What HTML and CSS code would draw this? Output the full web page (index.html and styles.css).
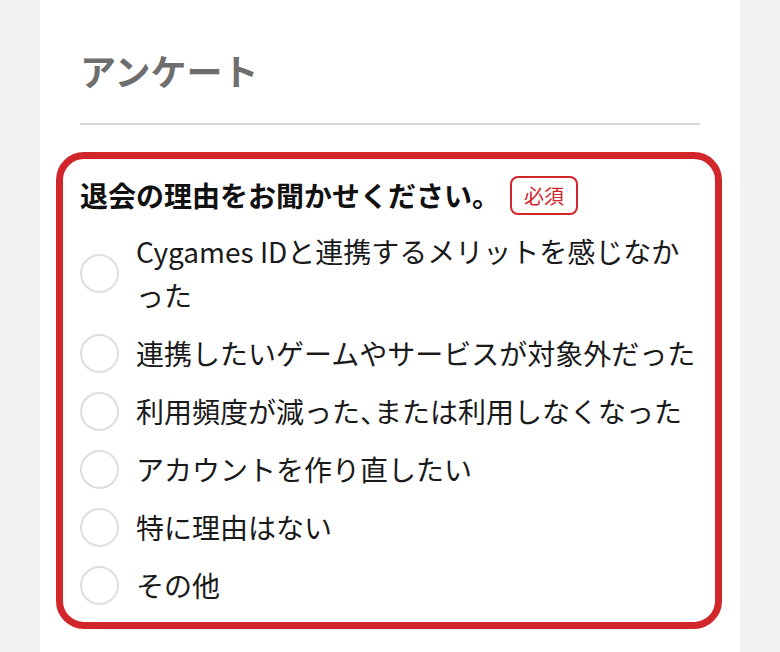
FILE: index.html
```html
<!DOCTYPE html>
<html lang="ja">
<head>
<meta charset="utf-8">
<title>アンケート</title>
<link rel="stylesheet" href="styles.css">
</head>
<body>
<main class="card">
  <h1 class="title">アンケート</h1>
  <hr class="divider">
  <section class="question">
    <div class="question-head">
      <span class="question-text">退会の理由をお聞かせください。</span>
      <span class="badge">必須</span>
    </div>
    <label class="option"><span class="radio"></span><span class="option-text">Cygames IDと連携するメリットを感じなかった</span></label>
    <label class="option"><span class="radio"></span><span class="option-text">連携したいゲームやサービスが対象外だった</span></label>
    <label class="option"><span class="radio"></span><span class="option-text">利用頻度が減った<span class="half">、</span>または利用しなくなった</span></label>
    <label class="option"><span class="radio"></span><span class="option-text">アカウントを作り直したい</span></label>
    <label class="option"><span class="radio"></span><span class="option-text">特に理由はない</span></label>
    <label class="option"><span class="radio"></span><span class="option-text">その他</span></label>
  </section>
</main>
</body>
</html>
```
FILE: styles.css
```css
html, body {
  margin: 0;
  padding: 0;
  background: #f2f2f2;
  height: 100%;
}
body {
  font-family: "Noto Sans CJK JP", "Noto Sans", sans-serif;
  color: #1a1a1a;
}
.card {
  box-sizing: border-box;
  width: 700px;
  min-height: 100%;
  margin: 0 40px;
  background: #ffffff;
  padding: 43px 40px 0;
}
.title {
  margin: 0;
  font-size: 36px;
  line-height: 54px;
  font-weight: 700;
  color: #6e6e6e;
}
.divider {
  margin: 26px 0 0;
  border: 0;
  height: 2px;
  background: #d8d8d8;
}
.question {
  margin: 27px -22px 0 -24px;
  border: 7px solid #d1272b;
  border-radius: 28px;
  padding: 16px 15px 15px 17px;
  display: flex;
  flex-direction: column;
  gap: 14px;
}
.question-head {
  display: flex;
  align-items: center;
  height: 40px;
}
.question-text {
  font-size: 28px;
  line-height: 40px;
  font-weight: 700;
  color: #111111;
}
.badge {
  margin-left: 10px;
  border: 2px solid #d1272b;
  border-radius: 8px;
  padding: 0 12px;
  font-size: 20px;
  line-height: 35px;
  color: #d1272b;
}
.option {
  display: flex;
  align-items: center;
  gap: 17px;
}
.radio {
  flex: none;
  box-sizing: border-box;
  width: 39px;
  height: 39px;
  border: 2px solid #dedede;
  border-radius: 50%;
  background: #ffffff;
}
.option-text {
  font-size: 28px;
  line-height: 44px;
  color: #1a1a1a;
}
.half {
  font-feature-settings: "halt";
}
```
